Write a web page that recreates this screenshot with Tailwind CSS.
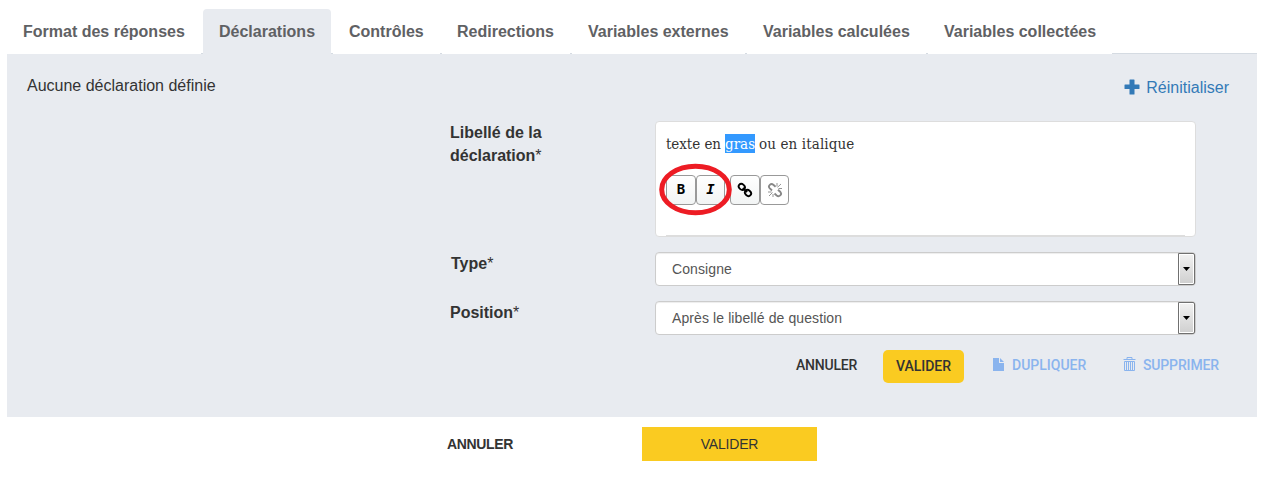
<!DOCTYPE html>
<html lang="fr">
<head>
<meta charset="utf-8">
<title>Déclarations</title>
<script src="https://cdn.jsdelivr.net/npm/@tailwindcss/browser@4"></script>
</head>
<body class="h-[494px] w-[1272px] overflow-hidden bg-white pt-[9px] pl-[7px] font-['Liberation_Sans',sans-serif] text-base text-[#333]">
<nav class="flex h-[45px] w-[1250px] gap-[2px] border-b border-[#d5dbe2] font-bold leading-[46px] whitespace-nowrap text-[#5f6164]">
  <a class="h-[45px] w-[194px] shrink-0 bg-white pl-4">Format des réponses</a>
  <a class="h-[45px] w-[128px] shrink-0 rounded-t bg-[#e8ebf0] pl-4">Déclarations</a>
  <a class="h-[45px] w-[107px] shrink-0 bg-white pl-4">Contrôles</a>
  <a class="h-[45px] w-[128px] shrink-0 bg-white pl-[15px]">Redirections</a>
  <a class="h-[45px] w-[173px] shrink-0 bg-white pl-4">Variables externes</a>
  <a class="h-[45px] w-[179px] shrink-0 bg-white pl-4">Variables calculées</a>
  <a class="h-[45px] w-[184px] shrink-0 bg-white pl-4">Variables collectées</a>
</nav>
<main class="h-[363px] w-[1250px] bg-[#e8ebf0] pt-5">
  <div class="flex h-[47px] justify-between pr-7 pl-5 leading-6">
    <p>Aucune déclaration définie</p>
    <a class="mt-[2px] flex h-6 gap-[6px] text-[#337ab7]">
      <svg class="mt-[3px] h-4 w-4" viewBox="0 0 16 16" fill="currentColor"><path d="M6 .5h4q.5 0 .5.5v4.500H15q.5 0 .5.5v3.500q0 .5-.5.5h-4.500v5q0 .5-.5.5H6q-.5 0-.5-.5V10H1q-.5 0-.5-.5V6q0-.5.5-.5h4.500V1Q5.500.5 6 .5z"/></svg>
      <span>Réinitialiser</span>
    </a>
  </div>
  <div class="flex pl-[443px]">
    <div class="w-[205px] leading-[23px] font-bold">Libellé de la<br>déclaration<span class="font-normal">*</span></div>
    <div class="relative h-[116px] w-[541px] rounded border border-[#ddd] bg-white px-[10px] pt-[11px]">
      <p class="flex h-[42px] font-['DejaVu_Serif_Condensed','DejaVu_Serif',serif] text-[15px] leading-[22px] whitespace-pre"><span class="w-[59px] tracking-[-0.05px]">texte en</span><span class="mt-px h-[19px] w-[30px] bg-[#3399ff] leading-5 text-white">gras</span><span class="ml-1 tracking-[0.12px]">ou en italique</span></p>
      <div class="flex h-[61px] border-b border-[#ddd]">
        <button class="flex h-[30px] w-[30px] items-center justify-center rounded border border-[#999] bg-linear-to-b from-white to-[#f2f4f4] pb-[2px] font-['DejaVu_Sans_Mono',monospace] text-sm leading-7 font-bold text-black">B</button>
        <button class="flex h-[30px] w-[29px] items-center justify-center rounded border border-[#999] bg-linear-to-b from-white to-[#f2f4f4] pb-[2px] font-['DejaVu_Sans_Mono',monospace] text-sm leading-7 font-bold text-black italic">I</button>
        <button class="ml-[5px] flex h-[30px] w-[30px] items-center justify-center rounded border border-[#999] bg-linear-to-b from-white to-[#f2f4f4]"><svg class="-mt-px h-4 w-4" viewBox="0 0 16 16" fill="none" stroke="#000" stroke-width="1.900"><ellipse cx="4.800" cy="4.900" rx="3.300" ry="2.700" transform="rotate(42 4.800 4.900)"/><ellipse cx="11" cy="11" rx="3.300" ry="2.700" transform="rotate(42 11 11)"/><path d="M5.800 6l4.300 4"/></svg></button>
        <button class="flex h-[30px] w-[29px] items-center justify-center rounded border border-[#999] bg-white"><svg class="-mt-px h-4 w-4" viewBox="0 0 16 16" fill="none" stroke="#888"><path stroke-width="1.900" d="M8.600 4.700L6.300 2.700Q4.500 1.300 2.800 2.900T2.600 6.200L5 8.500M7.500 11.500l2.200 2q1.800 1.500 3.500-.1t.2-3.400L11 7.700"/><path stroke-width=".9" d="M10.500 5.300L14 2M10 4.500V1M11.500 6.500H15M5.500 10.500L2 14M6 12v3M4.500 10H1"/></svg></button>
      </div>
      <svg class="absolute top-[41px] left-[2px] h-[54px] w-[76px]" viewBox="0 0 76 54" fill="none" stroke="#ed1c24" stroke-width="5"><ellipse cx="37.500" cy="26.500" rx="33.800" ry="23.300"/></svg>
    </div>
  </div>
  <div class="mt-[15px] flex pl-[444px]">
    <div class="w-[204px] leading-6 font-bold">Type<span class="font-normal">*</span></div>
    <div class="flex h-[34px] w-[541px] rounded border border-[#ccc] bg-white text-sm leading-8 text-[#555] shadow-[inset_0_1px_1px_rgba(0,0,0,0.075)]">
      <span class="flex-1 pl-4 tracking-[0.1px]">Consigne</span>
      <span class="flex h-8 w-[17px] items-center justify-center rounded-r-[2px] border border-[#707070] bg-linear-to-b from-[#f2f2f2] to-[#cfcfcf] shadow-[inset_0_0_0_1px_#fff]"><svg class="h-1 w-[7px]" viewBox="0 0 7 4"><path d="M0 0h7L3.500 4z"/></svg></span>
    </div>
  </div>
  <div class="mt-[15px] flex pl-[443px]">
    <div class="w-[205px] leading-6 font-bold">Position<span class="font-normal">*</span></div>
    <div class="flex h-[34px] w-[541px] rounded border border-[#ccc] bg-white text-sm leading-8 text-[#555] shadow-[inset_0_1px_1px_rgba(0,0,0,0.075)]">
      <span class="flex-1 pl-4 tracking-[0.1px]">Après le libellé de question</span>
      <span class="flex h-8 w-[17px] items-center justify-center rounded-r-[2px] border border-[#707070] bg-linear-to-b from-[#f2f2f2] to-[#cfcfcf] shadow-[inset_0_0_0_1px_#fff]"><svg class="h-1 w-[7px]" viewBox="0 0 7 4"><path d="M0 0h7L3.500 4z"/></svg></span>
    </div>
  </div>
  <div class="mt-[15px] flex pl-[789px] font-['Roboto',sans-serif] text-sm leading-[31px] font-medium whitespace-nowrap">
    <a class="w-[87px] tracking-[-0.2px]">ANNULER</a>
    <a class="h-[33px] w-[81px] rounded-[5px] bg-[#facb21] text-center leading-[33px]">VALIDER</a>
    <a class="ml-[29px] flex w-[130px] text-[#8ab4ee]"><svg class="mt-2 mr-[8px] h-[13px] w-[11px]" viewBox="0 0 11 13" fill="currentColor"><path d="M0 0h6v5h5v8H0z"/><path d="M7 0l4 4H7z"/></svg>DUPLIQUER</a>
    <a class="flex tracking-[-0.15px] text-[#8ab4ee]"><svg class="mt-[7px] mr-[7px] h-[14px] w-[13px]" viewBox="0 0 13 14" fill="none" stroke="currentColor"><path d="M.5 2.500h12M4 2V.5h5V2M1.500 4.500h10v9h-10zM3.500 5v8M5.500 5v8M7.500 5v8M9.500 5v8"/></svg>SUPPRIMER</a>
  </div>
</main>
<footer class="mt-[10px] flex pl-[440px] text-sm leading-[34px]">
  <a class="w-[195px] font-bold tracking-[-0.35px]">ANNULER</a>
  <button class="h-[34px] w-[175px] bg-[#facb21] tracking-[-0.2px]">VALIDER</button>
</footer>
</body>
</html>
